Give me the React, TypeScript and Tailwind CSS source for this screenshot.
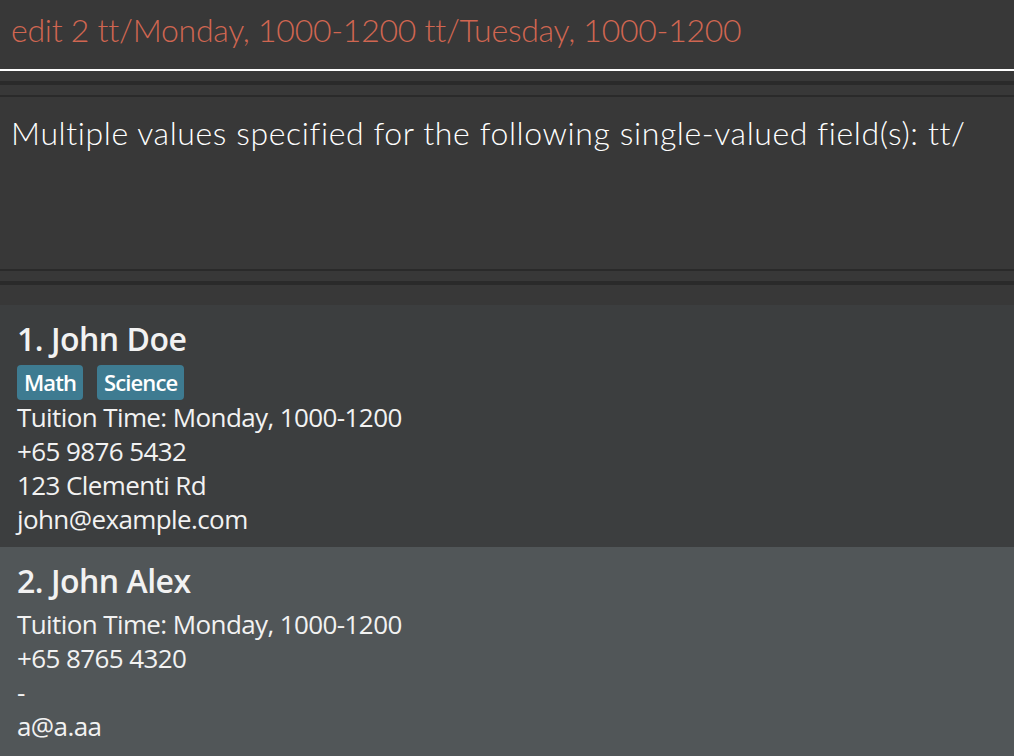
import React from "react";

const sans = { fontFamily: '"Open Sans", "Noto Sans", sans-serif' };
const lightFont = { fontFamily: 'Lato, "Open Sans", sans-serif' };

function Card({
  index,
  name,
  tags,
  lines,
  bg,
}: {
  index: number;
  name: string;
  tags: string[];
  lines: string[];
  bg: string;
}) {
  return (
    <div className={`${bg} pl-[17px] pt-[12px] pb-[11px] text-[#f2f2f2]`} style={sans}>
      <div className="text-[32px] leading-[44px] font-semibold tracking-[-0.5px] mb-[4px]">
        {index}. {name}
      </div>
      {tags.length > 0 && (
        <div className="flex gap-[14px]">
          {tags.map((t) => (
            <span
              key={t}
              className="h-[35px] px-[7px] rounded-[4px] bg-[#3e7b91] text-white text-[22px] leading-[35px] font-semibold tracking-[-0.9px]"
            >
              {t}
            </span>
          ))}
        </div>
      )}
      {lines.map((l, i) => (
        <div key={i} className="text-[26px] leading-[34px] tracking-[-0.6px]">
          {l}
        </div>
      ))}
    </div>
  );
}

export default function App() {
  return (
    <div className="w-[1014px] h-[756px] bg-[#383838] overflow-hidden flex flex-col" style={sans}>
      <div
        className="h-[69px] pl-[11px] pt-[7px] text-[32px] leading-[46px] font-light text-[#d06651] whitespace-nowrap tracking-[-0.25px] [font-variant-ligatures:none]"
        style={lightFont}
      >
        edit 2 tt/Monday, 1000-1200 tt/Tuesday, 1000-1200
      </div>
      <div className="h-[2px] bg-white" />
      <div className="h-[10px]" />
      <div className="h-[4px] bg-[#2a2a2a]" />
      <div className="h-[10px]" />
      <div className="h-[2px] bg-[#2a2a2a]" />
      <div
        className="h-[172px] pl-[11px] pt-[13px] text-[32px] leading-[46px] font-light text-white whitespace-nowrap tracking-[0.6px] [font-variant-ligatures:none]"
        style={lightFont}
      >
        Multiple values specified for the following single-valued field(s): tt/
      </div>
      <div className="h-[2px] bg-[#2a2a2a]" />
      <div className="h-[10px]" />
      <div className="h-[4px] bg-[#2a2a2a]" />
      <div className="h-[20px]" />
      <div className="flex-1 flex flex-col">
        <Card
          index={1}
          name="John Doe"
          tags={["Math", "Science"]}
          lines={["Tuition Time: Monday, 1000-1200", "+65 9876 5432", "123 Clementi Rd", "john@example.com"]}
          bg="bg-[#3c3e3f]"
        />
        <div className="flex-1 bg-[#515658]">
          <Card
            index={2}
            name="John Alex"
            tags={[]}
            lines={["Tuition Time: Monday, 1000-1200", "+65 8765 4320", "-", "a@a.aa"]}
            bg="bg-[#515658]"
          />
        </div>
      </div>
    </div>
  );
}
